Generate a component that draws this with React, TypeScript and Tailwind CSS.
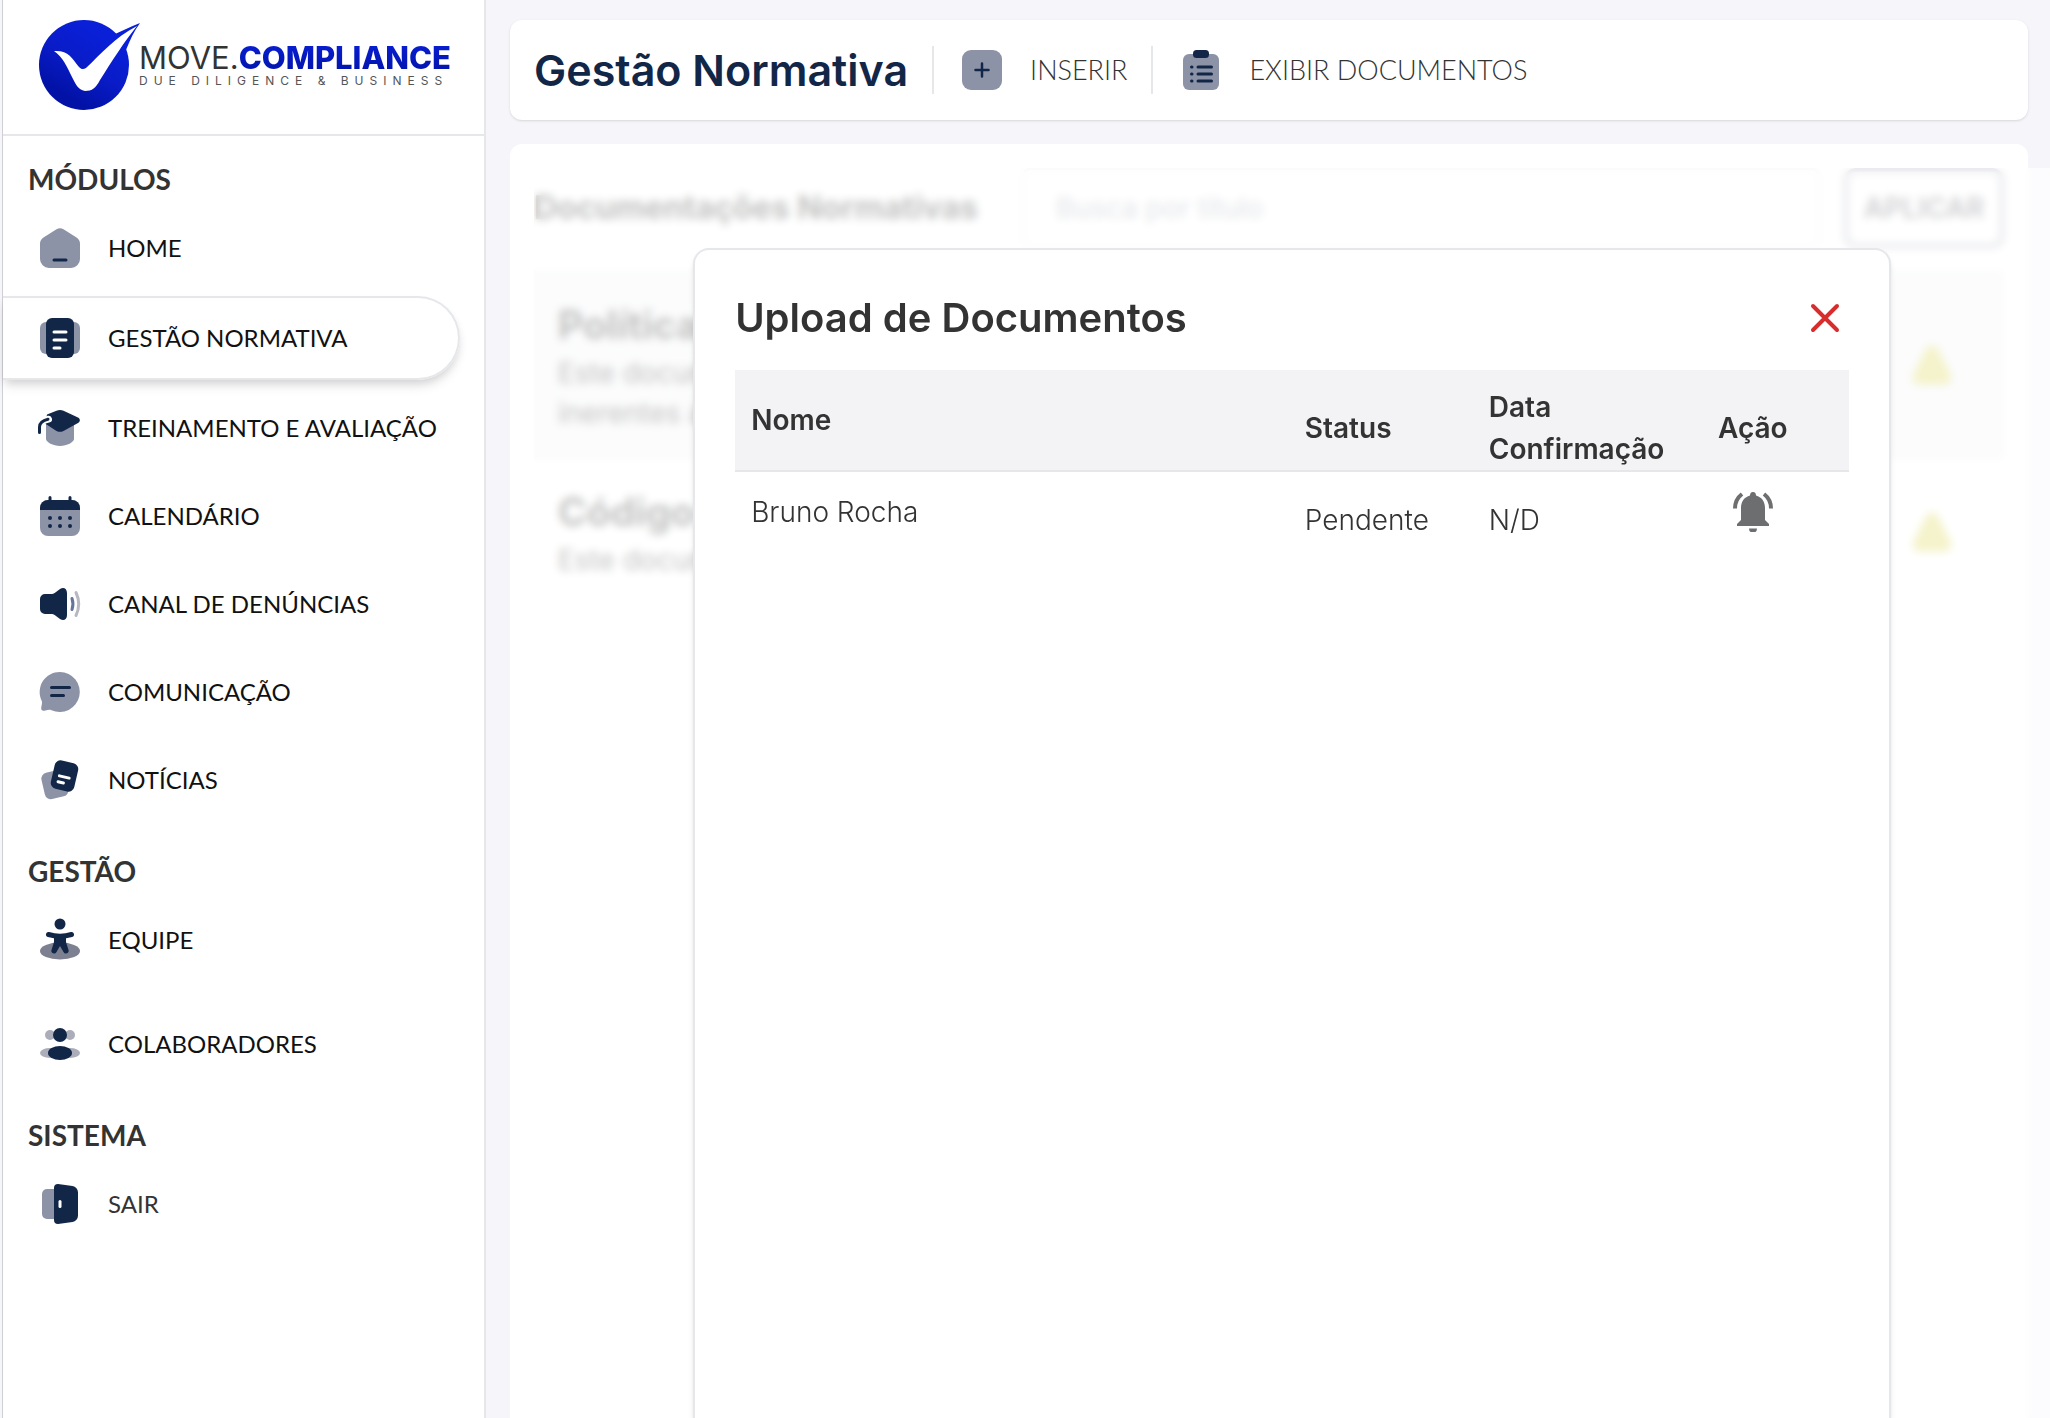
import React, { useState } from 'react';

const NAVY = '#122747';
const GRAY = '#8d93a7';

interface IconProps {
    children: React.ReactNode;
}

const Icon: React.FC<IconProps> = ({ children }) => (
    <svg viewBox="0 0 40 40" className="h-10 w-10 shrink-0 overflow-visible" fill="none" aria-hidden="true">
        {children}
    </svg>
);

const HomeIcon = () => (
    <Icon>
        <path d="M16.5 1.2a7 7 0 0 1 7 0l13 8.2A7.5 7.5 0 0 1 40 15.7V31a9 9 0 0 1-9 9H9a9 9 0 0 1-9-9V15.7a7.5 7.5 0 0 1 3.5-6.3z" fill={GRAY} />
        <path d="M14 32h12" stroke={NAVY} strokeWidth="3" strokeLinecap="round" />
    </Icon>
);

const DocIcon = () => (
    <Icon>
        <rect y="4" width="40" height="32" rx="6" fill={GRAY} />
        <rect x="6" width="28" height="40" rx="6" fill={NAVY} />
        <path d="M14 14h12M14 22h12M14 30h6" stroke="#fff" strokeWidth="3" strokeLinecap="round" />
    </Icon>
);

const CapIcon = () => (
    <Icon>
        <path d="M6 16h28v15c0 3-7 7-14 7S6 34 6 31z" fill={GRAY} />
        <path d="M16.5 2.8a9 9 0 0 1 7 0L38 9.5c2.5 1.5 2.5 4 0 5.5l-14.5 8a8 8 0 0 1-7 0L5 15.5l2-9z" fill={NAVY} />
        <path d="M-.5 24.5V19c0-4 3-6.5 9-7.8" stroke="#fff" strokeWidth="7" strokeLinecap="round" />
        <path d="M-.5 24.5V19c0-4 3-6.5 8.5-7.8" stroke={NAVY} strokeWidth="3" strokeLinecap="round" />
    </Icon>
);

const CalendarIcon = () => (
    <Icon>
        <rect y="4" width="40" height="36" rx="8" fill={GRAY} />
        <path d="M0 14v-2a8 8 0 0 1 8-8h24a8 8 0 0 1 8 8v2z" fill={NAVY} />
        <path d="M10 1.5V8M30 1.5V8" stroke={NAVY} strokeWidth="3" strokeLinecap="round" />
        {[10, 20, 30].map((x) => (
            <g key={x} fill={NAVY}>
                <circle cx={x} cy="22" r="2" />
                <circle cx={x} cy="30" r="2" />
            </g>
        ))}
    </Icon>
);

const SpeakerIcon = () => (
    <Icon>
        <path d="M0 15a5 5 0 0 1 5-5h6c1.5 0 3-.5 4-1.3l5-3.7c3.5-2.5 7-.5 7 4v22c0 4.500-3.500 6.500-7 4l-5-3.700c-1-.8-2.500-1.300-4-1.300H5a5 5 0 0 1-5-5z" fill={NAVY} />
        <path d="M32 14.5c1.2 3.5 1.2 7.5 0 11" stroke="#66739c" strokeWidth="3" strokeLinecap="round" />
        <path d="M36 8.5c3.3 7 3.3 16 0 23" stroke="#b7b8c2" strokeWidth="3" strokeLinecap="round" />
    </Icon>
);

const ChatIcon = () => (
    <Icon>
        <path d="M20 0a20 20 0 1 1-8.500 38.200c-2-.9-3.500-.4-6 .3-3 .8-4.500 0-4.300-2.500.2-2.500 1.300-4.500.6-7A20 20 0 0 1 20 0z" fill={GRAY} />
        <path d="M11.5 15.5h18M11.5 23.5h12" stroke={NAVY} strokeWidth="3" strokeLinecap="round" />
    </Icon>
);

const NewsIcon = () => (
    <Icon>
        <rect x="3" y="11" width="24" height="27" rx="6" transform="rotate(-13 15 25)" fill={GRAY} />
        <g transform="rotate(13 24.5 16)">
            <rect x="12.5" y="1.5" width="24" height="29" rx="6" fill={NAVY} />
            <path d="M19.5 17h10M19.5 23h5.5" stroke="#fff" strokeWidth="3" strokeLinecap="round" />
        </g>
    </Icon>
);

const TeamIcon = () => (
    <Icon>
        <ellipse cx="20" cy="31" rx="20" ry="8.5" fill="#7d8090" />
        <circle cx="20" cy="4" r="5.5" fill={NAVY} />
        <path d="M8.5 14.5c7 2 16 2 23 0" stroke={NAVY} strokeWidth="5" strokeLinecap="round" />
        <path d="M14 15h12v7l2.5 8a2.7 2.7 0 0 1-5 2L20 26l-3.5 6a2.7 2.7 0 0 1-5-2l2.5-8z" fill={NAVY} />
    </Icon>
);

const PeopleIcon = () => (
    <Icon>
        <g fill="#abaeba">
            <circle cx="10" cy="11" r="5" />
            <circle cx="30" cy="11" r="5" />
            <ellipse cx="10" cy="29" rx="10" ry="5" />
            <ellipse cx="30" cy="29" rx="10" ry="5" />
        </g>
        <circle cx="20" cy="11" r="7" fill={NAVY} />
        <ellipse cx="20" cy="29" rx="12" ry="7" fill={NAVY} />
    </Icon>
);

const DoorIcon = () => (
    <Icon>
        <path d="M14 5H7a5 5 0 0 0-5 5v20a5 5 0 0 0 5 5h7z" fill={GRAY} />
        <path d="M14 4a4 4 0 0 1 4-4l14.5 2A6.5 6.5 0 0 1 38 8.5v23a6.5 6.5 0 0 1-5.5 6.5L18 40a4 4 0 0 1-4-4z" fill={NAVY} />
        <path d="M20 17.5v5" stroke="#fff" strokeWidth="3" strokeLinecap="round" />
    </Icon>
);

const PlusIcon = () => (
    <Icon>
        <rect width="40" height="40" rx="9" fill={GRAY} />
        <path d="M20 13.5v13M13.5 20h13" stroke={NAVY} strokeWidth="2.5" strokeLinecap="round" />
    </Icon>
);

const ClipboardIcon = () => (
    <Icon>
        <rect x="2" y="4" width="36" height="36" rx="6" fill={GRAY} />
        <rect x="12" width="16" height="8" rx="3.5" fill={NAVY} />
        <path d="M17 17h13.5M17 24h13.5M17 31h13.5" stroke={NAVY} strokeWidth="3" strokeLinecap="round" />
        <path d="M10.5 17h.5M10.5 24h.5M10.5 31h.5" stroke={NAVY} strokeWidth="3" strokeLinecap="round" />
    </Icon>
);

const BellIcon = () => (
    <svg viewBox="0 0 40 40" className="h-10 w-10" aria-hidden="true">
        <path d="M20 0c2.200 0 3 1.600 3 3.600 5.500 1.400 9 6 9 12.400v12l4 4v2H4v-2l4-4V16C8 9.600 11.500 5 17 3.600 17 1.600 17.800 0 20 0zM16 36.500h8a4 4 0 0 1-8 0z" fill="#6d6e70" />
        <path d="M9 2C4.5 5.5 2 10 2 16.5M31 2c4.5 3.5 7 8 7 14.500" stroke="#6d6e70" strokeWidth="4" fill="none" />
    </svg>
);

const Logo = () => (
    <a href="#inicio" className="flex items-center pl-9" aria-label="Move Compliance">
        <svg viewBox="0 0 100 92" className="h-[92px] w-[100px] shrink-0 overflow-visible" aria-hidden="true">
            <defs>
                <linearGradient id="logo" x1="0.8" y1="0.2" x2="0.4" y2="0.9">
                    <stop offset="0" stopColor="#0a20d8" />
                    <stop offset="0.5" stopColor="#091cc8" />
                    <stop offset="1" stopColor="#0212a6" />
                </linearGradient>
            </defs>
            <circle cx="45" cy="46" r="45" fill="url(#logo)" />
            <path d="M72 17C82 12 91 8 101 4 95 12 91 21 87 31z" fill="#0a20d8" />
            <path d="M15 32c14-1 18 7 25 16 2 2 4 3 7 1C62 35 76 18 98 7 85 23 73 42 61 61c-4 8-8 11-15 11-7-1-10-8-13-14-5-10-9-20-18-26z" fill="#fff" />
        </svg>
        <span className="flex flex-col whitespace-nowrap">
            <span className="text-[31px] leading-8 text-[#333333]">
                MOVE.<span className="bg-gradient-to-b from-[#0a20d8] to-[#0212a6] bg-clip-text font-extrabold text-transparent">COMPLIANCE</span>
            </span>
            <span className="text-xs leading-[14px] tracking-[6px] text-[#555555]">DUE DILIGENCE &amp; BUSINESS</span>
        </span>
    </a>
);

interface Item {
    label: string;
    icon: React.ReactNode;
    muted?: boolean;
}

interface Section {
    title: string;
    spacing: string;
    items: Item[];
}

const sections: Section[] = [
    {
        title: 'MÓDULOS',
        spacing: 'gap-1',
        items: [
            { label: 'HOME', icon: <HomeIcon /> },
            { label: 'GESTÃO NORMATIVA', icon: <DocIcon /> },
            { label: 'TREINAMENTO E AVALIAÇÃO', icon: <CapIcon /> },
            { label: 'CALENDÁRIO', icon: <CalendarIcon /> },
            { label: 'CANAL DE DENÚNCIAS', icon: <SpeakerIcon /> },
            { label: 'COMUNICAÇÃO', icon: <ChatIcon /> },
            { label: 'NOTÍCIAS', icon: <NewsIcon /> },
        ],
    },
    {
        title: 'GESTÃO',
        spacing: 'gap-5',
        items: [
            { label: 'EQUIPE', icon: <TeamIcon /> },
            { label: 'COLABORADORES', icon: <PeopleIcon /> },
        ],
    },
    {
        title: 'SISTEMA',
        spacing: 'gap-1',
        items: [{ label: 'SAIR', icon: <DoorIcon />, muted: true }],
    },
];

const Sidebar = () => {
    const [active, setActive] = useState('GESTÃO NORMATIVA');

    return (
        <aside className="flex w-[484px] shrink-0 flex-col border-r-2 border-l border-r-gray-200 border-l-[#cfcfd6] bg-white">
            <div className="border-b-2 border-gray-200 pt-[19px] pb-[23px]">
                <Logo />
            </div>
            <nav className="flex flex-col gap-7 pt-[22px]">
                {sections.map((section) => (
                    <div key={section.title}>
                        <h2 className="mb-1.5 pl-[25px] font-['Lato'] text-[28px] leading-[42px] font-bold text-[#333333]">{section.title}</h2>
                        <ul className={`flex flex-col ${section.spacing}`}>
                            {section.items.map((item) => (
                                <li key={item.label} className={item.label === active ? 'my-0.5' : ''}>
                                    <a
                                        href="#modulo"
                                        onClick={() => setActive(item.label)}
                                        className={`mr-6 flex h-[84px] items-center gap-7 rounded-r-full pl-[37px] font-['Lato'] text-2xl ${
                                            item.label === active ? 'border-2 border-l-0 border-gray-200 shadow-[0_8px_12px_-2px_rgba(0,0,0,0.1),0_4px_8px_-2px_rgba(0,0,0,0.1)]' : ''
                                        } ${item.muted ? 'text-[#333333]' : 'text-[#111111]'}`}
                                    >
                                        {item.icon}
                                        {item.label}
                                    </a>
                                </li>
                            ))}
                        </ul>
                    </div>
                ))}
            </nav>
        </aside>
    );
};

const Header = () => (
    <header className="flex h-[100px] shrink-0 items-center rounded-xl bg-white px-6 shadow-sm">
        <h1 className="text-[43px] leading-[60px] font-semibold whitespace-nowrap text-[#122747]">Gestão Normativa</h1>
        <div className="ml-6 h-12 w-0.5 bg-gray-200" />
        <button type="button" className="ml-7 flex items-center gap-7 font-['Lato'] text-[27px] font-light text-[#333333]">
            <PlusIcon />
            INSERIR
        </button>
        <div className="ml-6 h-12 w-0.5 bg-gray-200" />
        <button type="button" className="ml-7 flex items-center gap-7 font-['Lato'] text-[27px] font-light text-[#333333]">
            <ClipboardIcon />
            EXIBIR DOCUMENTOS
        </button>
    </header>
);

const Warning = () => (
    <svg viewBox="0 0 40 40" className="h-10 w-10 shrink-0" aria-hidden="true">
        <path d="M20 7 33 33H7z" fill="#dcd650" stroke="#dcd650" strokeWidth="13" strokeLinejoin="round" />
    </svg>
);

const documents = [
    { title: 'Política', text: ['Este documento', 'inerentes a'], row: 'h-[190px] bg-gray-100' },
    { title: 'Código', text: ['Este documento'], row: 'h-36' },
];

const DocumentList = () => (
    <div className="text-[#333333]">
        <div className="flex h-20 items-center gap-6">
            <h2 className="w-[464px] text-[32px] font-bold whitespace-nowrap">Documentações Normativas</h2>
            <input
                type="text"
                aria-label="Busca por título"
                placeholder="Busca por título"
                className="h-20 min-w-0 flex-1 rounded-lg border-2 border-gray-200 px-8 text-[28px] placeholder:text-gray-400"
            />
            <button type="button" className="h-20 w-[160px] rounded-xl border-4 border-[#a5a8ba] text-[28px] font-semibold text-[#5b5d66]">
                APLICAR
            </button>
        </div>
        <div className="mt-[22px] flex flex-col">
            {documents.map((doc) => (
                <div key={doc.title} className={`flex items-center justify-between pr-[52px] pl-6 ${doc.row}`}>
                    <div>
                        <h3 className="text-[39px] leading-[56px] font-bold">{doc.title}</h3>
                        {doc.text.map((line) => (
                            <p key={line} className="text-[28px] leading-10">{line}</p>
                        ))}
                    </div>
                    <Warning />
                </div>
            ))}
        </div>
    </div>
);

const rows = [{ name: 'Bruno Rocha', status: 'Pendente', date: 'N/D' }];

const UploadModal = () => (
    <div role="dialog" aria-label="Upload de Documentos" className="w-[79%] rounded-t-2xl border-2 border-b-0 border-gray-200 bg-white px-10 pt-10 shadow-md">
        <div className="flex items-center justify-between pr-2">
            <h2 className="text-[40px] leading-[56px] font-semibold text-[#333333]">Upload de Documentos</h2>
            <button type="button" aria-label="Fechar">
                <svg viewBox="0 0 32 32" className="h-8 w-8" aria-hidden="true">
                    <path d="M4 4l24 24M28 4 4 28" stroke="#d92d2d" strokeWidth="4" strokeLinecap="round" />
                </svg>
            </button>
        </div>
        <table className="mt-6 w-full table-fixed text-left text-[28px] leading-[42px] text-[#333333]">
            <colgroup>
                <col />
                <col className="w-[184px]" />
                <col className="w-[184px]" />
                <col className="w-[192px]" />
            </colgroup>
            <thead>
                <tr className="border-b-2 border-gray-200 bg-[#f3f3f6]">
                    <th className="px-4 font-semibold">Nome</th>
                    <th className="px-4 pt-4 font-semibold">Status</th>
                    <th className="pt-4 pl-4 font-semibold">Data Confirmação</th>
                    <th className="pt-4 text-center font-semibold">Ação</th>
                </tr>
            </thead>
            <tbody>
                {rows.map((row) => (
                    <tr key={row.name} className="h-20 font-light">
                        <td className="px-4">{row.name}</td>
                        <td className="px-4 pt-4">{row.status}</td>
                        <td className="px-4 pt-4">{row.date}</td>
                        <td>
                            <button type="button" aria-label="Notificar" className="mx-auto block">
                                <BellIcon />
                            </button>
                        </td>
                    </tr>
                ))}
            </tbody>
        </table>
    </div>
);

const App = () => (
    <div className="flex h-screen overflow-hidden bg-[#f5f5fa] pl-0.5 font-['Inter',sans-serif]">
        <Sidebar />
        <main className="flex min-w-0 flex-1 flex-col gap-6 pt-5 pl-6">
            <div className="pr-[22px]">
                <Header />
            </div>
            <section className="relative min-h-0 flex-1">
                <div className="mr-[22px] h-full rounded-t-xl bg-white p-6">
                    <DocumentList />
                </div>
                <div className="absolute inset-0 top-6 left-6 flex justify-center bg-white/70 pt-20 backdrop-blur-[4px]">
                    <UploadModal />
                </div>
            </section>
        </main>
    </div>
);

export default App;
